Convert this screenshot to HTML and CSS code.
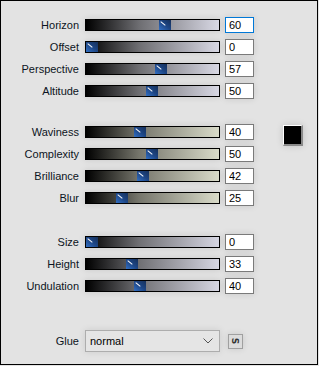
FILE: index.html
```html
<!DOCTYPE html>
<html lang="en">
<head>
    <meta charset="UTF-8">
    <title>Wave settings</title>
    <link rel="stylesheet" href="styles.css">
</head>
<body>
    <div class="panel">
        <div class="group">
            <div class="rows">
                <div class="row"><label>Horizon</label><div class="track gray"><span class="thumb" style="left: 73px"></span></div><input class="num focus" value="60"></div>
                <div class="row"><label>Offset</label><div class="track gray"><span class="thumb" style="left: 0px"></span></div><input class="num" value="0"></div>
                <div class="row"><label>Perspective</label><div class="track gray"><span class="thumb" style="left: 69px"></span></div><input class="num" value="57"></div>
                <div class="row"><label>Altitude</label><div class="track gray"><span class="thumb" style="left: 60px"></span></div><input class="num" value="50"></div>
            </div>
        </div>

        <div class="group second">
            <div class="rows">
                <div class="row"><label>Waviness</label><div class="track beige"><span class="thumb" style="left: 48px"></span></div><input class="num" value="40"></div>
                <div class="row"><label>Complexity</label><div class="track beige"><span class="thumb" style="left: 60px"></span></div><input class="num" value="50"></div>
                <div class="row"><label>Brilliance</label><div class="track beige"><span class="thumb" style="left: 51px"></span></div><input class="num" value="42"></div>
                <div class="row"><label>Blur</label><div class="track beige"><span class="thumb" style="left: 30px"></span></div><input class="num" value="25"></div>
            </div>
            <div class="swatch"></div>
        </div>

        <div class="group third">
            <div class="rows">
                <div class="row"><label>Size</label><div class="track lilac"><span class="thumb" style="left: 0px"></span></div><input class="num" value="0"></div>
                <div class="row"><label>Height</label><div class="track lilac"><span class="thumb" style="left: 40px"></span></div><input class="num" value="33"></div>
                <div class="row"><label>Undulation</label><div class="track lilac"><span class="thumb" style="left: 48px"></span></div><input class="num" value="40"></div>
            </div>
        </div>

        <div class="row glue">
            <label>Glue</label>
            <div class="select">
                <span>normal</span>
                <svg width="10" height="6" viewBox="0 0 10 6"><path d="M0.5 0.5 L5 5 L9.5 0.5" fill="none" stroke="#555" stroke-width="1"/></svg>
            </div>
            <button class="sbtn"><span>S</span></button>
        </div>
    </div>
</body>
</html>
```

FILE: styles.css
```css
body {
    margin: 0;
    background: #e3e3e3;
    font-family: "Liberation Sans", Arial, sans-serif;
    font-size: 11px;
}

.panel {
    box-sizing: border-box;
    width: 318px;
    height: 365px;
    border: 1px solid #000;
    background: #e3e3e3;
    padding-top: 13px;
}

.group {
    display: flex;
    align-items: flex-start;
}

.group.second {
    margin-top: 19px;
}

.group.third {
    margin-top: 22px;
}

.row {
    display: flex;
    align-items: center;
    height: 22px;
}

.row label {
    width: 78px;
    text-align: right;
    color: #0c1422;
    margin-right: 6px;
}

.track {
    position: relative;
    box-sizing: border-box;
    width: 135px;
    height: 12px;
    border: 1px solid #000;
    box-shadow: 0 0 7px rgba(0, 0, 0, 0.12);
}

.track.gray {
    background: linear-gradient(to right, #000 0%, #6e6e72 40%, #d8d8e4 100%);
}

.track.beige {
    background: linear-gradient(to right, #000 0%, #76766c 40%, #d9dbc9 100%);
}

.track.lilac {
    background: linear-gradient(to right, #000 0%, #707074 40%, #d6d6e2 100%);
}

.thumb {
    position: absolute;
    top: 0;
    width: 12px;
    height: 10px;
    background: linear-gradient(to bottom left, #16305a 0%, #1d4686 50%, #3370c4 100%);
}

.thumb::before {
    content: '';
    position: absolute;
    left: 1px;
    top: 3px;
    width: 6px;
    height: 1px;
    background: #fff;
    transform: rotate(40deg);
}

.num {
    box-sizing: border-box;
    width: 29px;
    height: 16px;
    margin-left: 5px;
    padding: 0 0 0 3px;
    border: 1px solid #7a7a7a;
    background: #fff;
    font-family: "Liberation Sans", Arial, sans-serif;
    font-size: 11px;
    color: #000;
    outline: none;
    box-shadow: 0 0 7px rgba(0, 0, 0, 0.12);
}

.num.focus {
    border-color: #0078d7;
}

.swatch {
    box-sizing: border-box;
    width: 20px;
    height: 21px;
    margin: 4px 0 0 29px;
    background: #000;
    border-top: 1px solid #fff;
    border-left: 1px solid #fff;
    border-right: 2px solid #8a8a8a;
    border-bottom: 2px solid #8a8a8a;
    box-shadow: 0 0 7px rgba(0, 0, 0, 0.15);
}

.glue {
    margin-top: 33px;
}

.select {
    box-sizing: border-box;
    display: flex;
    align-items: center;
    justify-content: space-between;
    width: 135px;
    height: 22px;
    padding: 0 6px 0 4px;
    border: 1px solid #adadad;
    background: #e5e5e5;
    font-size: 11px;
    color: #000;
    box-shadow: 0 0 7px rgba(0, 0, 0, 0.1);
}

.sbtn {
    box-sizing: border-box;
    display: flex;
    align-items: center;
    justify-content: center;
    width: 15px;
    height: 15px;
    margin-left: 8px;
    padding: 0;
    border: 1px solid #a0a0a0;
    background: #dcdcdc;
    box-shadow: 0 0 6px rgba(0, 0, 0, 0.12);
}

.sbtn span {
    display: block;
    font-family: "DejaVu Sans", sans-serif;
    font-size: 9px;
    font-weight: bold;
    color: #333;
    transform: rotate(90deg);
}
```
